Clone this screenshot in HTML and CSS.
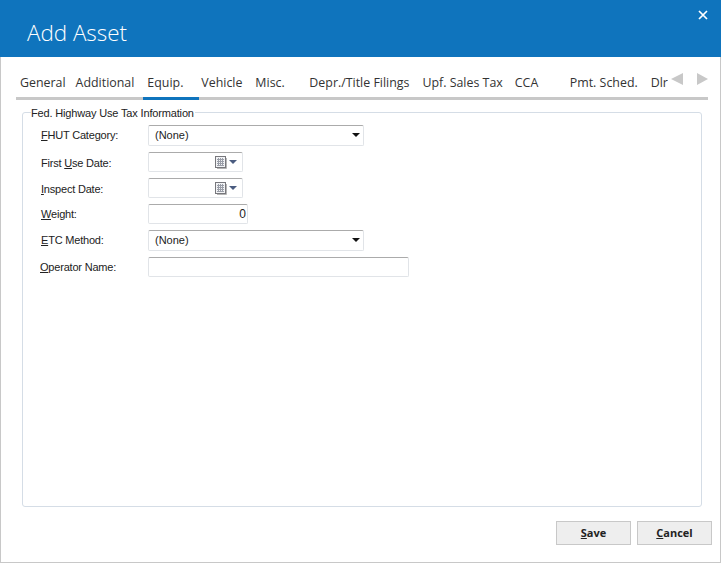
FILE: index.html
```html
<!DOCTYPE html>
<html lang="en">
<head>
<meta charset="utf-8">
<title>Add Asset</title>
<link rel="stylesheet" href="styles.css">
</head>
<body>
<div class="window">
  <header class="titlebar">
    <h1 class="title">Add Asset</h1>
    <button class="close" aria-label="Close">
      <svg width="10" height="10" viewBox="0 0 10 10"><path d="M1 1l8 8M9 1l-8 8" stroke="#fff" stroke-width="1.7" fill="none"/></svg>
    </button>
  </header>
  <nav class="tabbar">
    <div class="tabs">
      <span class="tab">General</span>
      <span class="tab">Additional</span>
      <span class="tab active">Equip.</span>
      <span class="tab">Vehicle</span>
      <span class="tab">Misc.</span>
      <span class="tab">Depr./Title Filings</span>
      <span class="tab">Upf. Sales Tax</span>
      <span class="tab">CCA</span>
      <span class="tab">Pmt. Sched.</span>
      <span class="tab">Dlr</span>
    </div>
    <div class="arrows">
      <svg width="13" height="12" viewBox="0 0 13 12"><path d="M12 0v12L0 6z" fill="#c8c8c8"/></svg>
      <svg width="12" height="12" viewBox="0 0 12 12"><path d="M1 0v12l11-6z" fill="#c8c8c8"/></svg>
    </div>
  </nav>
  <fieldset class="group">
    <legend class="legend">Fed. Highway Use Tax Information</legend>
    <div class="form">
      <label class="label up"><u>F</u>HUT Category:</label>
      <div class="field select row-a"><span>(None)</span><i class="caret"></i></div>
      <label class="label down">First <u>U</u>se Date:</label>
      <div class="field date row-b">
        <svg class="cal" width="13" height="13" viewBox="0 0 13 13"><rect x="0.5" y="0.5" width="10" height="11" fill="#f2f3f5" stroke="#77777c"/><path d="M2 3.500h7M2 5.500h7M2 7.500h7M2 9.500h7M3.500 2v8M5.500 2v8M7.500 2v8" stroke="#9a9ea8" stroke-width="1"/><path d="M11.500 2v10.500H2" stroke="#b5b5b5" fill="none"/></svg>
        <i class="caret blue"></i>
      </div>
      <label class="label down"><u>I</u>nspect Date:</label>
      <div class="field date row-b">
        <svg class="cal" width="13" height="13" viewBox="0 0 13 13"><rect x="0.5" y="0.5" width="10" height="11" fill="#f2f3f5" stroke="#77777c"/><path d="M2 3.500h7M2 5.500h7M2 7.500h7M2 9.500h7M3.500 2v8M5.500 2v8M7.500 2v8" stroke="#9a9ea8" stroke-width="1"/><path d="M11.500 2v10.500H2" stroke="#b5b5b5" fill="none"/></svg>
        <i class="caret blue"></i>
      </div>
      <label class="label"><u>W</u>eight:</label>
      <div class="field number row-b">0</div>
      <label class="label up"><u>E</u>TC Method:</label>
      <div class="field select row-a"><span>(None)</span><i class="caret"></i></div>
      <label class="label op"><u>O</u>perator Name:</label>
      <div class="field text row-b"></div>
    </div>
  </fieldset>
  <footer class="actions">
    <button class="btn"><u>S</u>ave</button>
    <button class="btn"><u>C</u>ancel</button>
  </footer>
</div>
</body>
</html>
```

FILE: styles.css
```css
* { box-sizing: border-box; }
html, body { margin: 0; height: 100%; }
body { background: #fff; overflow: hidden; }

.window {
  width: 721px;
  height: 563px;
  display: flex;
  flex-direction: column;
  border: 1px solid #c8c8c8;
  border-top: 0;
  background: #fff;
  font-family: "Liberation Sans", Arial, sans-serif;
}

.titlebar {
  height: 57px;
  margin: 0 -1px;
  flex: none;
  background: #0f74bd;
  display: flex;
  justify-content: space-between;
  color: #fff;
}
.title {
  margin: 18px 0 0 27px;
  font: 300 22.400px/30px "Open Sans", sans-serif;
}
.close {
  border: 0;
  background: none;
  padding: 0;
  margin: 10px 13px 0 0;
  width: 10px;
  height: 10px;
  display: flex;
}

.tabbar {
  flex: none;
  margin: 16px 12px 0 15px;
  height: 27px;
  display: flex;
  justify-content: space-between;
  border-bottom: 3px solid #c8c8c8;
}
.tabs {
  width: 652px;
  display: flex;
  overflow: hidden;
  height: 27px;
  flex: none;
}
.tab {
  flex: none;
  min-width: 54px;
  padding: 1px 8px 0 4px;
  white-space: nowrap;
  position: relative;
  font: 400 12.400px/18px "Open Sans", sans-serif;
  color: #333;
}
.tab:first-child { padding-right: 6px; }
.tab:nth-child(2) { padding-right: 9px; }
.tab:nth-child(6) { padding-right: 9px; }
.tab:nth-child(8) { min-width: 55px; }
.tab:nth-child(9) { padding-right: 9px; }
.tab.active::after {
  content: "";
  position: absolute;
  left: 0;
  right: -2px;
  top: 24px;
  height: 3px;
  background: #0f74bd;
}
.arrows {
  display: flex;
  gap: 12px;
  align-items: flex-start;
}

.group {
  flex: none;
  margin: 5px 0 0 21px;
  width: 680px;
  height: 402px;
  padding: 0 0 0 18px;
  border: 1px solid #d5dde6;
  border-radius: 3px;
  min-width: 0;
}
.legend {
  margin-left: -10px;
  padding: 2px 1px 0 0;
  font-size: 11px;
  letter-spacing: -0.160px;
  line-height: 13px;
  color: #222;
}

.form {
  display: grid;
  grid-template-columns: 107px auto;
  justify-content: start;
  justify-items: start;
  align-items: center;
  row-gap: 6px;
  margin-top: 5px;
}
.label {
  font-size: 11px;
  letter-spacing: -0.200px;
  line-height: 14px;
  color: #222;
}
.up { padding-bottom: 2px; }
.down { padding-top: 2px; }
.op { margin-left: -1px; }

.row-a { height: 21px; }
.row-b { height: 20px; }

.field {
  border: 1px solid #e1e4e8;
  border-top-color: #ababab;
  border-radius: 2px;
  background: #fff;
  color: #222;
  display: flex;
  align-items: center;
  font-size: 11px;
}
.select {
  width: 216px;
  padding: 0 3px 2px 6px;
  justify-content: space-between;
}
.date {
  width: 95px;
  justify-content: flex-end;
  gap: 1px;
  padding-right: 5px;
}
.number {
  width: 100px;
  justify-content: flex-end;
  padding-right: 1px;
  font-size: 12px;
}
.text { width: 261px; }

.caret {
  width: 0;
  height: 0;
  border: 4px solid transparent;
  border-top: 4px solid #111;
  border-bottom: 0;
}
.blue { border-top-color: #4a5c80; }
.cal { flex: none; }

.actions {
  flex: none;
  display: flex;
  justify-content: flex-end;
  gap: 6px;
  margin-top: 14px;
  padding-right: 8px;
}
.btn {
  width: 75px;
  height: 24px;
  padding: 0 0 2px;
  background: #eeeeee;
  border: 1px solid #c8c8c8;
  font: 700 11px "Open Sans", sans-serif;
  color: #222;
}
```
